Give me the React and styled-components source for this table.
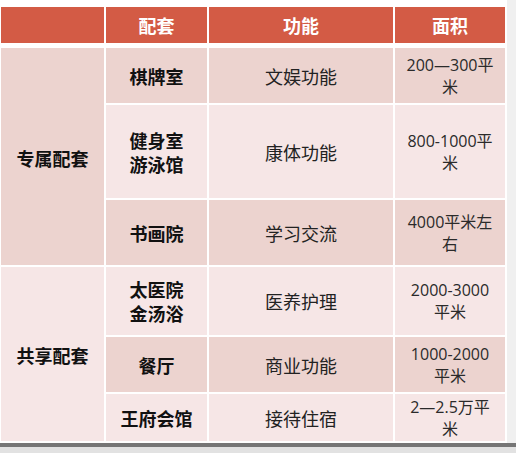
import styled, { createGlobalStyle } from 'styled-components';

const GlobalStyle = createGlobalStyle`
  html, body {
    margin: 0;
    padding: 0;
    background: #ffffff;
  }
  body {
    font-family: "Noto Sans CJK SC", "Noto Sans", sans-serif;
  }
`;

const COLS = '103px 101px 184px 110px';

const groups = [
    {
        name: '专属配套',
        rows: [
            { place: '棋牌室', use: '文娱功能', area: '200—300平\n米', h: 55 },
            { place: '健身室\n游泳馆', use: '康体功能', area: '800-1000平\n米', h: 93 },
            { place: '书画院', use: '学习交流', area: '4000平米左\n右', h: 65 },
        ],
    },
    {
        name: '共享配套',
        rows: [
            { place: '太医院\n金汤浴', use: '医养护理', area: '2000-3000\n平米', h: 68 },
            { place: '餐厅', use: '商业功能', area: '1000-2000\n平米', h: 55 },
            { place: '王府会馆', use: '接待住宿', area: '2—2.5万平\n米', h: 47 },
        ],
    },
];

const App = () => {
    const rows = groups.flatMap(g => g.rows);
    let index = 0;

    return (
        <>
            <GlobalStyle />
            <Frame>
                <Header>
                    <HeadCell />
                    <HeadCell>配套</HeadCell>
                    <HeadCell>功能</HeadCell>
                    <HeadCell>面积</HeadCell>
                </Header>
                <Body style={{ gridTemplateRows: rows.map(r => r.h + 'px').join(' ') }}>
                    {groups.map((g, gi) => {
                        const start = index + 1;
                        index += g.rows.length;
                        return (
                            <GroupCell
                                key={g.name}
                                $dark={gi === 0}
                                style={{ gridRow: `${start} / span ${g.rows.length}` }}
                            >
                                {g.name}
                            </GroupCell>
                        );
                    })}
                    {rows.map((r, i) => (
                        <Row key={r.place} $dark={i % 2 === 0}>
                            <PlaceCell>{r.place}</PlaceCell>
                            <UseCell>{r.use}</UseCell>
                            <AreaCell>{r.area}</AreaCell>
                        </Row>
                    ))}
                </Body>
                <Bottom />
            </Frame>
        </>
    );
};

export default App;

const Frame = styled.div`
    width: 516px;
    height: 453px;
    box-sizing: border-box;
    padding: 7px 0 0 1px;
    display: flex;
    flex-direction: column;
    background: linear-gradient(to right, #ffffff 507px, #f0f0f0 507px);
    overflow: hidden;
`;

const Header = styled.div`
    display: grid;
    grid-template-columns: ${COLS};
    column-gap: 2px;
    height: 36px;
    margin-bottom: 5px;
`;

const HeadCell = styled.div`
    background: #d35b45;
    color: #ffffff;
    font-weight: 700;
    font-size: 18px;
    display: flex;
    align-items: center;
    justify-content: center;
`;

const Body = styled.div`
    display: grid;
    grid-template-columns: ${COLS};
    column-gap: 2px;
    row-gap: 2px;
`;

const Row = styled.div`
    display: contents;

    & > div {
        background: ${p => (p.$dark ? '#ecd3cf' : '#f6e6e6')};
    }
`;

const Cell = styled.div`
    display: flex;
    align-items: center;
    justify-content: center;
    text-align: center;
    white-space: pre-line;
`;

const GroupCell = styled(Cell)`
    grid-column: 1;
    background: ${p => (p.$dark ? '#ecd3cf' : '#f6e6e6')};
    color: #111111;
    font-weight: 700;
    font-size: 18px;
    padding-top: 2px;
`;

const PlaceCell = styled(Cell)`
    grid-column: 2;
    color: #111111;
    font-weight: 700;
    font-size: 18px;
    line-height: 24px;
`;

const UseCell = styled(Cell)`
    grid-column: 3;
    color: #222222;
    font-size: 18px;
`;

const AreaCell = styled(Cell)`
    grid-column: 4;
    color: #2a2a2a;
    font-family: "Open Sans", "Noto Sans CJK SC", sans-serif;
    font-size: 16px;
    line-height: 22px;
`;

const Bottom = styled.div`
    margin-top: 2px;
    margin-left: -1px;
    flex: 1;
    border-top: 4px solid #767676;
    background: #e2e2e2;
`;
